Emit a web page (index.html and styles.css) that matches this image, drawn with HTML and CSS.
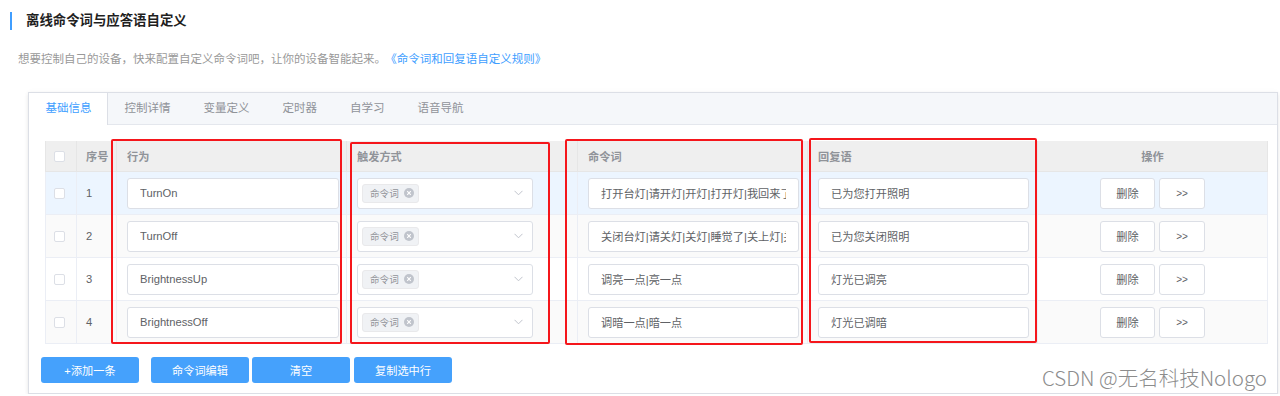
FILE: index.html
```html
<!DOCTYPE html>
<html lang="zh-CN">

<head>
    <meta charset="UTF-8">
    <meta name="viewport" content="width=device-width, initial-scale=1.0">
    <title>离线命令词与应答语自定义</title>
    <link rel="stylesheet" href="styles.css">
</head>

<body>
    <div class="page">
        <h2 class="title">离线命令词与应答语自定义</h2>
        <p class="intro">想要控制自己的设备，快来配置自定义命令词吧，让你的设备智能起来。<a class="rule-link" href="#">《命令词和回复语自定义规则》</a></p>

        <div class="card">
            <div class="tabs">
                <div class="tab active">基础信息</div>
                <div class="tab">控制详情</div>
                <div class="tab">变量定义</div>
                <div class="tab">定时器</div>
                <div class="tab">自学习</div>
                <div class="tab">语音导航</div>
            </div>

            <div class="card-body">
                <div class="table">
                    <div class="row head">
                        <div class="cell sel"><span class="check"></span></div>
                        <div class="cell idx">序号</div>
                        <div class="cell">行为</div>
                        <div class="cell">触发方式</div>
                        <div class="cell">命令词</div>
                        <div class="cell">回复语</div>
                        <div class="cell op">操作</div>
                    </div>

                    <div class="row current">
                        <div class="cell sel"><span class="check"></span></div>
                        <div class="cell idx">1</div>
                        <div class="cell"><input class="field wide" value="TurnOn"></div>
                        <div class="cell">
                            <div class="select">
                                <span class="tag">命令词<span class="tag-close"><svg width="10" height="10" viewBox="0 0 10 10"><path d="M3.2 3.2l3.6 3.6M6.8 3.2l-3.6 3.6" stroke="#fff" stroke-width="1.1" /></svg></span></span>
                                <svg class="arrow" width="9" height="6" viewBox="0 0 9 6"><path d="M0.5 0.8l4 4 4-4" fill="none" stroke="#c0c4cc" stroke-width="1" /></svg>
                            </div>
                        </div>
                        <div class="cell"><input class="field" value="打开台灯|请开灯|开灯|打开灯|我回来了|开一下灯"></div>
                        <div class="cell"><input class="field" value="已为您打开照明"></div>
                        <div class="cell op"><button class="op-btn del">删除</button><button class="op-btn more">&gt;&gt;</button></div>
                    </div>

                    <div class="row stripe">
                        <div class="cell sel"><span class="check"></span></div>
                        <div class="cell idx">2</div>
                        <div class="cell"><input class="field wide" value="TurnOff"></div>
                        <div class="cell">
                            <div class="select">
                                <span class="tag">命令词<span class="tag-close"><svg width="10" height="10" viewBox="0 0 10 10"><path d="M3.2 3.2l3.6 3.6M6.8 3.2l-3.6 3.6" stroke="#fff" stroke-width="1.1" /></svg></span></span>
                                <svg class="arrow" width="9" height="6" viewBox="0 0 9 6"><path d="M0.5 0.8l4 4 4-4" fill="none" stroke="#c0c4cc" stroke-width="1" /></svg>
                            </div>
                        </div>
                        <div class="cell"><input class="field" value="关闭台灯|请关灯|关灯|睡觉了|关上灯|关一下灯"></div>
                        <div class="cell"><input class="field" value="已为您关闭照明"></div>
                        <div class="cell op"><button class="op-btn del">删除</button><button class="op-btn more">&gt;&gt;</button></div>
                    </div>

                    <div class="row">
                        <div class="cell sel"><span class="check"></span></div>
                        <div class="cell idx">3</div>
                        <div class="cell"><input class="field wide" value="BrightnessUp"></div>
                        <div class="cell">
                            <div class="select">
                                <span class="tag">命令词<span class="tag-close"><svg width="10" height="10" viewBox="0 0 10 10"><path d="M3.2 3.2l3.6 3.6M6.8 3.2l-3.6 3.6" stroke="#fff" stroke-width="1.1" /></svg></span></span>
                                <svg class="arrow" width="9" height="6" viewBox="0 0 9 6"><path d="M0.5 0.8l4 4 4-4" fill="none" stroke="#c0c4cc" stroke-width="1" /></svg>
                            </div>
                        </div>
                        <div class="cell"><input class="field" value="调亮一点|亮一点"></div>
                        <div class="cell"><input class="field" value="灯光已调亮"></div>
                        <div class="cell op"><button class="op-btn del">删除</button><button class="op-btn more">&gt;&gt;</button></div>
                    </div>

                    <div class="row stripe">
                        <div class="cell sel"><span class="check"></span></div>
                        <div class="cell idx">4</div>
                        <div class="cell"><input class="field wide" value="BrightnessOff"></div>
                        <div class="cell">
                            <div class="select">
                                <span class="tag">命令词<span class="tag-close"><svg width="10" height="10" viewBox="0 0 10 10"><path d="M3.2 3.2l3.6 3.6M6.8 3.2l-3.6 3.6" stroke="#fff" stroke-width="1.1" /></svg></span></span>
                                <svg class="arrow" width="9" height="6" viewBox="0 0 9 6"><path d="M0.5 0.8l4 4 4-4" fill="none" stroke="#c0c4cc" stroke-width="1" /></svg>
                            </div>
                        </div>
                        <div class="cell"><input class="field" value="调暗一点|暗一点"></div>
                        <div class="cell"><input class="field" value="灯光已调暗"></div>
                        <div class="cell op"><button class="op-btn del">删除</button><button class="op-btn more">&gt;&gt;</button></div>
                    </div>

                    <!-- red annotation frames drawn over the columns -->
                    <div class="mark mark-action"></div>
                    <div class="mark mark-trigger"></div>
                    <div class="mark mark-command"></div>
                    <div class="mark mark-reply"></div>
                </div>

                <div class="actions">
                    <button class="btn add">+添加一条</button>
                    <button class="btn">命令词编辑</button>
                    <button class="btn">清空</button>
                    <button class="btn">复制选中行</button>
                </div>
            </div>

            <div class="watermark">CSDN @无名科技Nologo</div>
        </div>
    </div>
</body>

</html>
```

FILE: styles.css
```css
body {
    margin: 0;
    background-color: #fff;
    font-family: "Liberation Sans", "Noto Sans CJK SC", sans-serif;
    color: #606266;
}

.page {
    padding-top: 12px;
}

.title {
    margin: 0 0 0 10px;
    height: 18px;
    line-height: 18px;
    padding-left: 14px;
    border-left: 2px solid #409eff;
    font-size: 13.4px;
    font-weight: bold;
    color: #1f1f1f;
}

.intro {
    margin: 22px 0 0 18px;
    font-size: 11.5px;
    line-height: 14px;
    color: #999;
}

.rule-link {
    margin-left: 5px;
    color: #409eff;
    text-decoration: none;
}

.card {
    position: relative;
    box-sizing: border-box;
    width: 1250px;
    height: 302px;
    margin: 26px 0 0 28px;
    border: 1px solid #dcdfe6;
    background-color: #fff;
    box-shadow: 0 2px 4px rgba(0, 0, 0, 0.08), 0 0 6px rgba(0, 0, 0, 0.03);
}

.tabs {
    display: flex;
    height: 31px;
    background-color: #f5f7fa;
    border-bottom: 1px solid #e4e7ed;
}

.tab {
    padding: 0 15.5px 0 16.5px;
    line-height: 31px;
    font-size: 11.5px;
    color: #909399;
    border-right: 1px solid transparent;
}

.tab.active {
    height: 32px;
    background-color: #fff;
    color: #409eff;
    border-right-color: #dcdfe6;
}

.card-body {
    padding: 16px 0 0 16px;
}

/* table */

.table {
    position: relative;
    width: 1223px;
}

.row {
    display: grid;
    grid-template-columns: 32px 40px 230px 231px 230px 230px 230px;
    height: 43px;
    background-color: #fff;
}

.row.head {
    height: 31px;
    background-color: #efefef;
    font-weight: bold;
    color: #909399;
}

.row.current {
    background-color: #ecf5ff;
}

.row.stripe {
    background-color: #fafafa;
}

.cell {
    box-sizing: border-box;
    display: flex;
    align-items: center;
    padding: 0 0 0 10px;
    border-right: 1px solid #ebeef5;
    border-bottom: 1px solid #ebeef5;
    font-size: 11.2px;
    white-space: nowrap;
    overflow: hidden;
}

.row.head .cell {
    border-color: #e6e6e6;
}

.cell.sel {
    padding-left: 8px;
    border-left: 1px solid #ebeef5;
}

.cell.idx {
    padding-left: 9px;
}

.cell.op {
    justify-content: center;
    padding: 0;
    gap: 4px;
}

.check {
    box-sizing: border-box;
    flex-shrink: 0;
    width: 11px;
    height: 11px;
    border: 1px solid #dcdfe6;
    border-radius: 2px;
    background-color: #fff;
}

.field {
    box-sizing: border-box;
    flex-shrink: 0;
    width: 211px;
    height: 31px;
    padding: 0 12px;
    border: 1px solid #dcdfe6;
    border-radius: 3px;
    background-color: #fff;
    font-family: "Liberation Sans", "Noto Sans CJK SC", sans-serif;
    font-size: 11.2px;
    color: #606266;
    outline: none;
}

.field.wide {
    width: 212px;
}

.select {
    box-sizing: border-box;
    flex-shrink: 0;
    display: flex;
    align-items: center;
    width: 176px;
    height: 31px;
    padding-left: 4px;
    border: 1px solid #dcdfe6;
    border-radius: 3px;
    background-color: #fff;
}

.tag {
    box-sizing: border-box;
    display: flex;
    align-items: center;
    gap: 5px;
    height: 19px;
    padding: 0 4px 0 7px;
    border: 1px solid #e9e9eb;
    border-radius: 3px;
    background-color: #f0f2f5;
    font-size: 9.6px;
    color: #909399;
}

.tag-close {
    display: flex;
    width: 10px;
    height: 10px;
    border-radius: 50%;
    background-color: #c0c4cc;
}

.arrow {
    margin-left: auto;
    margin-right: 9px;
}

.op-btn {
    box-sizing: border-box;
    flex-shrink: 0;
    height: 31px;
    border: 1px solid #dcdfe6;
    border-radius: 3px;
    background-color: #fff;
    font-family: "Liberation Sans", "Noto Sans CJK SC", sans-serif;
    font-size: 11.2px;
    color: #606266;
    padding: 0;
}

.op-btn.del {
    width: 55px;
}

.op-btn.more {
    width: 46px;
    font-size: 10px;
}

.mark {
    position: absolute;
    box-sizing: border-box;
    border: 2px solid #f5161b;
    border-radius: 2px;
    pointer-events: none;
}

.mark-action {
    left: 66px;
    top: -2px;
    width: 231px;
    height: 205px;
}

.mark-trigger {
    left: 305px;
    top: 1px;
    width: 200px;
    height: 202px;
}

.mark-command {
    left: 520px;
    top: -2px;
    width: 238px;
    height: 206px;
}

.mark-reply {
    left: 764px;
    top: -3px;
    width: 228px;
    height: 205px;
}

/* bottom buttons */

.actions {
    display: flex;
    gap: 3px;
    margin: 13px 0 0 -4px;
}

.btn {
    width: 98px;
    height: 26px;
    padding: 0;
    border: none;
    border-radius: 3px;
    background-color: #45a1fc;
    color: #fff;
    font-family: "Liberation Sans", "Noto Sans CJK SC", sans-serif;
    font-size: 11.2px;
}

.btn.add {
    margin-right: 9px;
}

.btn:last-child {
    margin-left: 1px;
}

.watermark {
    position: absolute;
    right: 10px;
    top: 272px;
    font-family: "Noto Sans CJK SC", sans-serif;
    font-weight: 300;
    font-size: 20.5px;
    line-height: 24px;
    color: #8c8c8c;
    white-space: nowrap;
}
```
